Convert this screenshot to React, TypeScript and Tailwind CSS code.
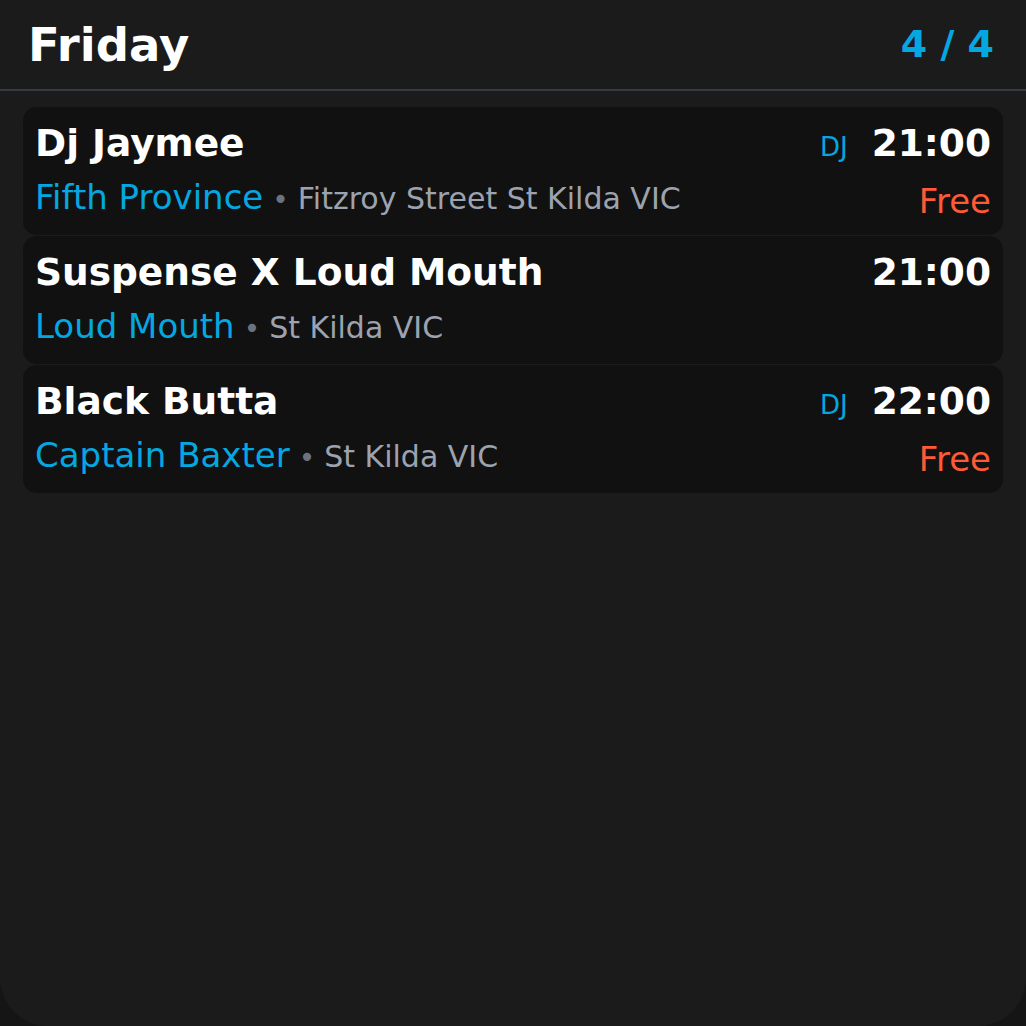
const events = [
  { title: 'Dj Jaymee', venue: 'Fifth Province', place: 'Fitzroy Street St Kilda VIC', tag: 'DJ', time: '21:00', price: 'Free' },
  { title: 'Suspense X Loud Mouth', venue: 'Loud Mouth', place: 'St Kilda VIC', tag: '', time: '21:00', price: '' },
  { title: 'Black Butta', venue: 'Captain Baxter', place: 'St Kilda VIC', tag: 'DJ', time: '22:00', price: 'Free' },
];

const EventCard = ({ ev }: { ev: (typeof events)[number] }) => (
  <article className="flex h-[128px] justify-between rounded-[14px] bg-[#111111] px-3 pt-[14px]">
    <div className="flex flex-col gap-[10px]">
      <h2 className="text-[37.5px] font-bold leading-[44px] text-white">{ev.title}</h2>
      <p className="flex items-baseline leading-[44px]">
        <span className="text-[34px] text-[#05a7e0]">{ev.venue}</span>
        <span className="mx-[9px] text-[28px] text-[#6b7280]">•</span>
        <span className="text-[30px] text-[#9ca3af]">{ev.place}</span>
      </p>
    </div>
    <div className="flex flex-col items-end gap-[10px]">
      <div className="flex items-baseline gap-[24px] leading-[44px]">
        {ev.tag && <span className="text-[26px] text-[#05a7e0]">{ev.tag}</span>}
        <span className="text-[37.5px] font-bold text-white">{ev.time}</span>
      </div>
      {ev.price && <span className="text-[34px] leading-[44px] text-[#ff5a36]">{ev.price}</span>}
    </div>
  </article>
);

const App = () => {
  return (
    <div className="h-[1026px] w-[1026px] bg-[#151515] font-['DejaVu_Sans',sans-serif]">
      <div className="h-full rounded-b-[48px] bg-[#1b1b1b]">
        <header className="flex h-[91px] items-center justify-between border-b-2 border-[#353a44] pl-[28px] pr-[32px]">
          <h1 className="mt-[2px] text-[46.5px] font-bold text-white">Friday</h1>
          <span className="text-[38px] font-bold text-[#05a7e0]">4 / 4</span>
        </header>
        <section className="mx-[23px] mt-[16px] flex flex-col gap-px">
          {events.map((ev) => (
            <EventCard key={ev.title} ev={ev} />
          ))}
        </section>
      </div>
    </div>
  );
};

export default App;
